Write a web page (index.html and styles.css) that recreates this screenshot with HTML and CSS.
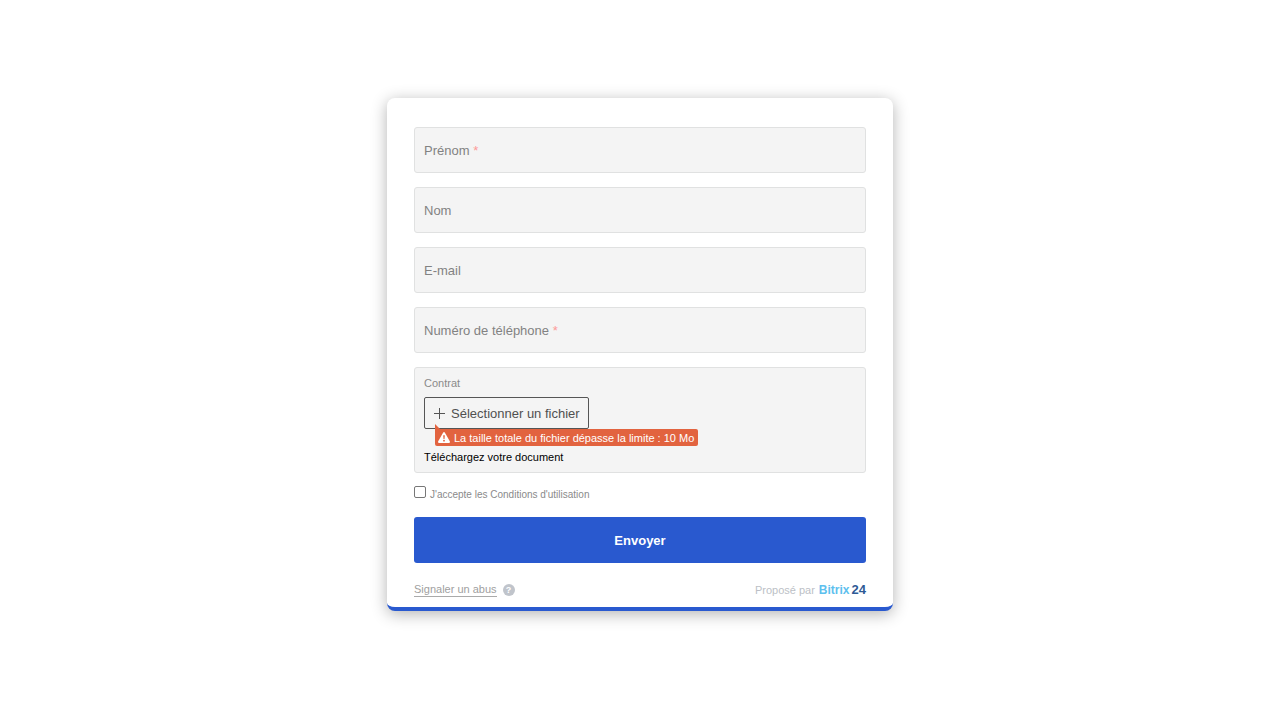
FILE: index.html
```html
<!DOCTYPE html>
<html lang="fr">
<head>
<meta charset="utf-8">
<meta name="viewport" content="width=device-width, initial-scale=1">
<title>Formulaire</title>
<link rel="stylesheet" href="styles.css">
</head>
<body>
<main class="page">
  <form class="card">
    <div class="fields">
      <label class="field" for="prenom"><span>Prénom <span class="required">*</span></span><input class="field-input" id="prenom" type="text"></label>
      <label class="field" for="nom"><span>Nom</span><input class="field-input" id="nom" type="text"></label>
      <label class="field" for="email"><span>E-mail</span><input class="field-input" id="email" type="email"></label>
      <label class="field" for="tel"><span>Numéro de téléphone <span class="required">*</span></span><input class="field-input" id="tel" type="tel"></label>
      <div class="file-field">
        <span class="file-label">Contrat</span>
        <div class="picker">
          <button class="file-button" type="button">
            <svg class="plus" viewBox="0 0 11 11" aria-hidden="true"><path d="M5.5 0v11M0 5.5h11" fill="none" stroke="#555" stroke-width="1"/></svg>
            Sélectionner un fichier
          </button>
          <div class="alert" role="alert">
            <svg class="warning" viewBox="0 0 12 11" aria-hidden="true"><path d="M5.2.5Q6-.5 6.8.5L11.8 9.3Q12.3 10.8 11 11H1Q-.3 10.8.2 9.3Z" fill="#fff"/><path d="M5.2 3.2h1.6L6.5 7h-1z" fill="#e2633f"/><circle cx="6" cy="8.7" r=".9" fill="#e2633f"/></svg>
            La taille totale du fichier dépasse la limite : 10 Mo
          </div>
        </div>
        <span class="hint">Téléchargez votre document</span>
      </div>
    </div>
    <label class="consent" for="terms"><input class="checkbox" id="terms" type="checkbox"><span>J'accepte les Conditions d'utilisation</span></label>
    <button class="submit" type="submit">Envoyer</button>
    <footer class="footer">
      <div class="report">
        <a class="report-link" href="#">Signaler un abus</a>
        <span class="help">?</span>
      </div>
      <div class="credit"><span>Proposé par</span><span class="brand">Bitrix<span class="brand-number">24</span></span></div>
    </footer>
  </form>
</main>
</body>
</html>
```
FILE: styles.css
```css
* { box-sizing: border-box; }
body {
  margin: 0;
  background: #fff;
  font-family: "Liberation Sans", Arial, sans-serif;
  font-size: 13px;
}
.page { padding: 98px 16px; }
.card {
  max-width: 506px;
  margin: 0 auto;
  padding: 29px 27px 10px;
  border-bottom: 4px solid #2959cf;
  border-radius: 8px;
  background: #fff;
  box-shadow: 0 3px 16px rgba(0, 0, 0, .3);
}
.fields { display: flex; flex-direction: column; gap: 14px; }
.field {
  display: flex;
  align-items: center;
  gap: 8px;
  height: 46px;
  padding: 0 9px;
  border: 1px solid #e0e1e1;
  border-radius: 3px;
  background: #f4f4f4;
  color: #828282;
}
.required { color: #fd9a98; }
.field-input {
  flex: 1;
  min-width: 0;
  border: 0;
  outline: 0;
  background: transparent;
  font: inherit;
}
.file-field {
  padding: 7px 9px;
  border: 1px solid #e0e1e1;
  border-radius: 3px;
  background: #f4f4f4;
}
.file-label {
  display: block;
  color: #8a8a8a;
  font-size: 11px;
  line-height: 16px;
}
.picker { position: relative; margin: 6px 0 20px; }
.file-button {
  display: flex;
  align-items: center;
  gap: 6px;
  height: 32px;
  padding: 0 8px 0 9px;
  border: 1px solid #555;
  border-radius: 2px;
  background: transparent;
  color: #505050;
  font: inherit;
}
.plus { width: 11px; height: 11px; }
.alert {
  position: absolute;
  top: 32px;
  left: 11px;
  display: flex;
  align-items: center;
  gap: 4px;
  height: 17px;
  padding: 0 4px 0 3px;
  border-radius: 0 2px 2px 2px;
  background: #e2633f;
  color: #fff;
  font-size: 11px;
  white-space: nowrap;
}
.alert::before {
  content: "";
  position: absolute;
  bottom: 100%;
  left: 0;
  border-left: 5px solid #e2633f;
  border-top: 5px solid transparent;
}
.warning { width: 12px; height: 11px; }
.hint {
  display: block;
  color: #000;
  font-size: 11px;
  line-height: 16px;
}
.consent {
  display: flex;
  gap: 4px;
  margin-top: 13px;
  color: #8a8a8a;
  font-size: 10px;
  line-height: 18px;
}
.checkbox {
  appearance: none;
  width: 12px;
  height: 12px;
  margin: 0;
  border: 1px solid #777;
  border-radius: 2px;
  background: #fff;
}
.submit {
  display: block;
  width: 100%;
  height: 46px;
  margin-top: 13px;
  border: 0;
  border-radius: 3px;
  background: #2959cf;
  color: #fff;
  font: bold 13px "Liberation Sans", Arial, sans-serif;
}
.footer {
  display: flex;
  justify-content: space-between;
  align-items: center;
  margin-top: 19px;
  font-size: 11px;
}
.report { display: flex; align-items: center; gap: 6px; }
.report-link {
  border-bottom: 1px solid #aaa;
  color: #a0a0a0;
  line-height: 14px;
  text-decoration: none;
}
.help {
  width: 12px;
  height: 12px;
  border-radius: 50%;
  background: #c0c4cb;
  color: #fff;
  font-size: 9px;
  font-weight: bold;
  line-height: 12px;
  text-align: center;
}
.credit { display: flex; align-items: baseline; gap: 4px; color: #bcbfc6; }
.brand { color: #5dc0ee; font-size: 12px; font-weight: bold; }
.brand-number { margin-left: 2px; color: #2e5a95; font-size: 13px; }
```
